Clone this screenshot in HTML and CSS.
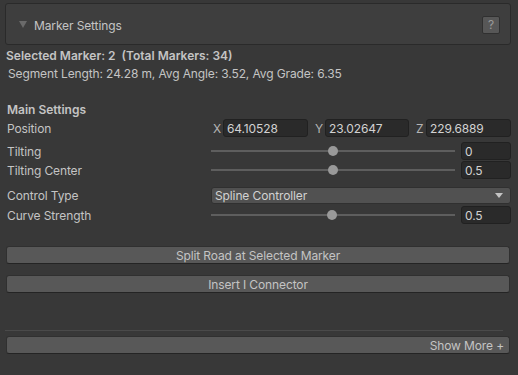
FILE: index.html
```html
<!DOCTYPE html>
<html lang="en">
<head>
    <meta charset="UTF-8">
    <title>Marker Settings</title>
    <link rel="stylesheet" href="styles.css">
</head>
<body>
<div class="inspector">
    <div class="foldout">
        <span class="arrow"></span>
        <span class="foldout-title">Marker Settings</span>
        <span class="help">?</span>
    </div>

    <div class="info bold">Selected Marker: 2&nbsp; (Total Markers: 34)</div>
    <div class="info stats">Segment Length: 24.28 m, Avg Angle: 3.52, Avg Grade: 6.35</div>

    <div class="section bold">Main Settings</div>

    <div class="row row-position">
        <div class="label">Position</div>
        <div class="vector">
            <div class="axis"><span class="axis-name">X</span><span class="field">64.10528</span></div>
            <div class="axis"><span class="axis-name">Y</span><span class="field">23.02647</span></div>
            <div class="axis"><span class="axis-name">Z</span><span class="field">229.6889</span></div>
        </div>
    </div>

    <div class="row row-tilt">
        <div class="label">Tilting</div>
        <div class="slider">
            <div class="track"><span class="thumb" style="left: 117px"></span></div>
            <span class="field value">0</span>
        </div>
    </div>

    <div class="row row-center">
        <div class="label">Tilting Center</div>
        <div class="slider">
            <div class="track"><span class="thumb" style="left: 117px"></span></div>
            <span class="field value">0.5</span>
        </div>
    </div>

    <div class="row row-control">
        <div class="label">Control Type</div>
        <div class="dropdown">
            <span>Spline Controller</span>
            <span class="caret"></span>
        </div>
    </div>

    <div class="row row-curve">
        <div class="label">Curve Strength</div>
        <div class="slider">
            <div class="track"><span class="thumb" style="left: 116px"></span></div>
            <span class="field value">0.5</span>
        </div>
    </div>

    <div class="button split">Split Road at Selected Marker</div>
    <div class="button insert">Insert I Connector</div>

    <div class="separator"></div>
    <div class="button more">Show More +</div>
</div>
</body>
</html>
```

FILE: styles.css
```css
*{
    margin: 0;
    padding: 0;
    box-sizing: border-box;
}
html, body{
    height: 100%;
}
body{
    background: #383838;
    color: #c4c4c4;
    font-family: Inter, "Noto Sans", sans-serif;
    font-size: 12px;
    letter-spacing: -0.12px;
    overflow: hidden;
}
.inspector{
    padding: 3px 7px 0 5px;
}
.bold{
    font-weight: 600;
    letter-spacing: 0;
}

/* foldout header */
.foldout{
    display: flex;
    align-items: center;
    height: 42px;
    background: #3e3e3e;
    border: 1px solid #2a2a2a;
    border-radius: 3px;
    padding: 0 10px 0 13px;
}
.arrow{
    width: 0;
    height: 0;
    border-left: 4px solid transparent;
    border-right: 4px solid transparent;
    border-top: 7px solid #6a6a6a;
    margin-right: 7px;
    margin-top: 1px;
}
.foldout-title{
    flex: 1;
    padding-top: 2px;
}
.help{
    width: 18px;
    height: 18px;
    background: #575757;
    border: 1px solid #303030;
    border-radius: 2px;
    color: #9a9a9a;
    font-size: 12px;
    text-align: center;
    line-height: 16px;
    margin-top: 2px;
}

/* info lines */
.info{
    height: 18px;
    line-height: 18px;
    padding-left: 1px;
}
.info.bold{
    margin-top: 2px;
}
.stats{
    padding-left: 3px;
}
.section{
    margin-top: 18px;
    height: 18px;
    line-height: 18px;
    padding-left: 2px;
}

/* property rows */
.row{
    display: flex;
    align-items: center;
    height: 18px;
}
.row-tilt{ margin-top: 5px; }
.row-center{ margin-top: 1px; }
.row-control{ margin-top: 7px; }
.row-curve{ margin-top: 2px; }
.label{
    width: 206px;
    padding-left: 2px;
    padding-top: 1px;
    flex-shrink: 0;
}
.field{
    display: block;
    height: 18px;
    line-height: 17px;
    background: #2a2a2a;
    border: 1px solid #212121;
    border-radius: 3px;
    padding-left: 3px;
    color: #d2d2d2;
}
.vector{
    flex: 1;
    display: grid;
    grid-template-columns: 96px 95px 96px;
    column-gap: 6px;
    margin-left: 1px;
}
.axis{
    display: flex;
    align-items: center;
}
.axis-name{
    width: 11px;
    padding-left: 1px;
    padding-top: 1px;
    color: #b4b4b4;
}
.axis .field{
    flex: 1;
}
.slider{
    flex: 1;
    display: flex;
    align-items: center;
}
.track{
    position: relative;
    flex: 1;
    height: 2px;
    background: #5e5e5e;
    margin-right: 6px;
}
.thumb{
    position: absolute;
    top: -4px;
    width: 10px;
    height: 10px;
    border-radius: 50%;
    background: #999;
}
.value{
    width: 50px;
}
.dropdown{
    flex: 1;
    display: flex;
    align-items: center;
    justify-content: space-between;
    height: 17px;
    background: #515151;
    border: 1px solid #303030;
    border-radius: 3px;
    padding: 1px 7px 0 3px;
    color: #d2d2d2;
}
.caret{
    width: 0;
    height: 0;
    border-left: 4px solid transparent;
    border-right: 4px solid transparent;
    border-top: 5px solid #c4c4c4;
}

/* buttons */
.button{
    height: 18px;
    line-height: 17px;
    background: #585858;
    border: 1px solid #303030;
    border-bottom-color: #242424;
    border-radius: 3px;
    text-align: center;
    margin-left: 1px;
    margin-right: 1px;
}
.split{
    margin-top: 22px;
}
.insert{
    margin-top: 11px;
}
.separator{
    height: 1px;
    background: #4a4a4a;
    margin: 37px 8px 0 0;
}
.more{
    margin-top: 5px;
    text-align: right;
    padding-right: 5px;
}
```
